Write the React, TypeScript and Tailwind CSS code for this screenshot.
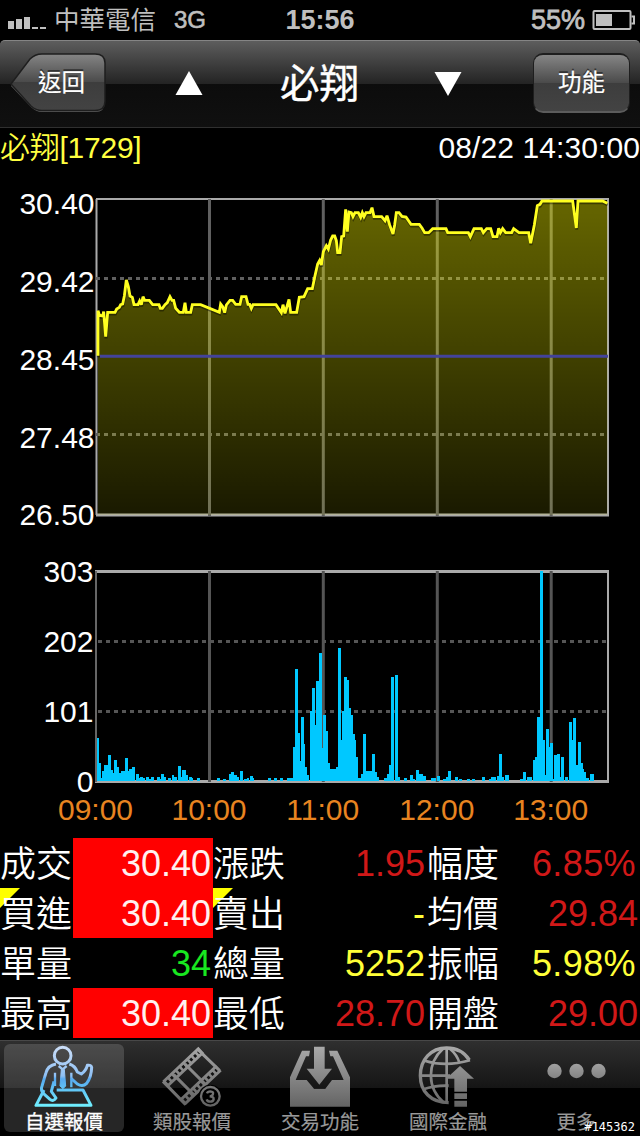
import type { ReactNode } from 'react';
import clsx from 'clsx';

type Tone = 'red' | 'yellow' | 'green' | 'limit';

interface Quote {
  label: string;
  value: string;
  tone: Tone;
  flagged?: boolean;
}

const quotes: Quote[] = [
  { label: '成交', value: '30.40', tone: 'limit' },
  { label: '漲跌', value: '1.95', tone: 'red' },
  { label: '幅度', value: '6.85%', tone: 'red' },
  { label: '買進', value: '30.40', tone: 'limit', flagged: true },
  { label: '賣出', value: '-', tone: 'yellow', flagged: true },
  { label: '均價', value: '29.84', tone: 'red' },
  { label: '單量', value: '34', tone: 'green' },
  { label: '總量', value: '5252', tone: 'yellow' },
  { label: '振幅', value: '5.98%', tone: 'yellow' },
  { label: '最高', value: '30.40', tone: 'limit' },
  { label: '最低', value: '28.70', tone: 'red' },
  { label: '開盤', value: '29.00', tone: 'red' },
];

const toneClass: Record<Tone, string> = {
  red: 'text-[#d01818]',
  yellow: 'text-[#ffff38]',
  green: 'text-[#18e820]',
  limit: 'bg-[#ff0000] text-[#fff0f0]',
};

const hours = [
  { x: 96, label: '09:00' },
  { x: 209.5, label: '10:00' },
  { x: 323.3, label: '11:00' },
  { x: 437.3, label: '12:00' },
  { x: 551.2, label: '13:00' },
];

// Both series are in thirds of a pixel
const priceLine =
  '24,497 24,362 28,375 38,378 41,365 47,440 53,367 75,367 80,357 88,352 92,344 98,342 103,318 109,270 115,290 120,318 127,322 132,344 144,344 149,333 154,344 159,320 164,331 178,331 188,344 207,344 211,355 217,355 225,344 232,338 240,320 246,331 251,331 257,355 268,367 280,367 285,338 289,367 302,367 307,344 332,344 388,367 392,342 398,350 404,368 409,345 420,331 428,331 437,343 450,343 455,320 468,320 474,343 479,343 484,355 489,344 558,344 574,368 579,344 585,370 597,328 602,367 620,367 628,322 642,320 653,296 667,296 674,262 683,222 689,211 694,225 700,185 709,167 715,177 722,150 728,138 734,138 739,152 743,188 750,188 755,140 761,138 767,58 772,125 777,66 784,68 789,80 795,68 805,68 812,82 817,68 822,80 828,68 840,68 846,53 852,80 875,80 885,92 891,77 899,105 909,132 914,105 919,68 927,68 936,79 948,81 963,103 988,103 996,114 1004,128 1016,128 1028,116 1068,116 1073,128 1135,128 1141,140 1152,116 1174,116 1180,128 1190,116 1202,116 1209,140 1221,140 1226,115 1231,128 1238,116 1247,128 1265,128 1271,116 1287,128 1316,128 1322,160 1333,105 1342,47 1350,43 1356,33 1448,33 1459,114 1464,33 1538,33 1552,40';

// [left, right, top]
const volumeBars = [
  [200, 207, 535], [207, 212, 610], [212, 216, 655], [216, 222, 632], [222, 234, 614], [234, 243, 586],
  [243, 248, 630], [248, 252, 640], [252, 260, 600], [260, 268, 622], [268, 273, 638], [273, 285, 633],
  [285, 293, 595], [293, 298, 632], [298, 306, 627], [306, 314, 622], [318, 327, 643], [327, 330, 655],
  [330, 338, 650], [338, 345, 655], [347, 356, 652], [356, 362, 657], [362, 371, 652], [381, 390, 652],
  [390, 393, 657], [393, 402, 643], [402, 407, 650], [414, 422, 655], [426, 432, 646], [432, 440, 650],
  [443, 452, 619], [452, 457, 650], [457, 468, 631], [468, 473, 646], [477, 486, 650], [486, 490, 655],
  [501, 510, 655], [561, 570, 655], [578, 587, 658], [597, 603, 643], [603, 612, 637], [612, 621, 646],
  [621, 627, 652], [629, 638, 633], [641, 650, 658], [650, 656, 655], [660, 668, 649], [668, 672, 655],
  [714, 723, 655], [732, 741, 655], [750, 759, 655], [771, 789, 655], [789, 795, 562], [795, 804, 328],
  [804, 809, 520], [809, 813, 603], [813, 822, 472], [822, 825, 553], [825, 831, 622], [831, 837, 646],
  [840, 846, 454], [846, 855, 385], [855, 858, 496], [858, 867, 364], [867, 876, 280], [876, 879, 565],
  [879, 887, 466], [887, 894, 514], [894, 900, 610], [900, 918, 628], [918, 924, 620], [924, 933, 265],
  [933, 937, 540], [937, 942, 454], [942, 951, 352], [951, 957, 361], [957, 962, 445], [962, 969, 466],
  [969, 974, 523], [974, 978, 541], [978, 984, 592], [984, 993, 655], [993, 999, 643], [999, 1008, 523],
  [1008, 1026, 634], [1026, 1035, 583], [1035, 1040, 637], [1040, 1046, 650], [1062, 1071, 655],
  [1071, 1077, 643], [1077, 1083, 616], [1083, 1092, 352], [1095, 1104, 346], [1104, 1109, 652],
  [1122, 1131, 655], [1140, 1149, 646], [1150, 1156, 658], [1158, 1167, 631], [1167, 1180, 643],
  [1180, 1188, 649], [1204, 1218, 655], [1220, 1229, 649], [1240, 1248, 658], [1248, 1254, 652],
  [1254, 1263, 634], [1275, 1284, 652], [1287, 1296, 656], [1312, 1320, 658], [1327, 1334, 658],
  [1356, 1365, 652], [1378, 1384, 656], [1384, 1398, 652], [1401, 1407, 649], [1407, 1416, 583],
  [1416, 1422, 652], [1426, 1436, 646], [1471, 1479, 656], [1479, 1488, 637], [1492, 1506, 650],
  [1509, 1515, 601], [1515, 1521, 592], [1521, 1530, 472], [1530, 1539, 33], [1539, 1545, 541],
  [1545, 1548, 646], [1548, 1557, 508], [1557, 1560, 562], [1560, 1569, 550], [1569, 1572, 658],
  [1572, 1581, 586], [1581, 1590, 583], [1590, 1593, 650], [1593, 1602, 592], [1605, 1614, 650],
  [1617, 1626, 487], [1626, 1629, 541], [1629, 1638, 475], [1638, 1643, 615], [1643, 1653, 547],
  [1653, 1658, 610], [1658, 1663, 628], [1663, 1669, 637], [1669, 1676, 655], [1680, 1692, 643],
];

function StatusBar() {
  return (
    <div className="flex h-10 shrink-0 items-center text-[#bfbfbf]">
      <div className="flex flex-1 items-center">
        <div className="mt-[5px] ml-2 flex h-3 items-end gap-0.5">
          <span className="h-2 w-1.5 bg-[#bfbfbf]" />
          <span className="h-2.5 w-1.5 bg-[#bfbfbf]" />
          <span className="h-3 w-1.5 bg-[#bfbfbf]" />
          <span className="h-0.5 w-1.5 bg-[#bfbfbf]" />
          <span className="h-0.5 w-1.5 bg-[#bfbfbf]" />
        </div>
        <span className="ml-2 text-[25.5px] leading-10">中華電信</span>
        <span className="ml-[18px] text-2xl leading-10 [-webkit-text-stroke:0.6px_#bfbfbf]">3G</span>
      </div>
      <span className="text-[27px] leading-10 font-bold">15:56</span>
      <div className="flex flex-1 items-center justify-end">
        <span className="text-[27px] leading-10 [-webkit-text-stroke:0.8px_#bfbfbf]">55%</span>
        <svg className="mr-[5px] ml-[7px] h-5 w-[43px]" viewBox="0 0 43 20" fill="none">
          <rect x="1.5" y="1" width="37" height="18" rx="1" stroke="#bfbfbf" strokeWidth="2" />
          <path d="M39.5 6.5h2.500v7h-2.500" stroke="#bfbfbf" strokeWidth="2" />
          <path d="M4 4h16v12H4z" fill="#bfbfbf" />
        </svg>
      </div>
    </div>
  );
}

function NavBar() {
  return (
    <div className="h-[88px] shrink-0 overflow-hidden rounded-t-[5px] border-t border-[#858585] border-b border-b-[#303030] bg-[linear-gradient(#5d5d5d_0%,#232323_50%,#0c0c0c_50%,#101010_100%)]">
      <div className="flex h-full items-center pb-0.5">
        <button className="relative ml-2.5 h-[60px] w-24">
          <svg className="absolute inset-0" width="96" height="60" viewBox="0 0 96 60">
            <defs>
              <linearGradient id="back" x1="0" y1="0" x2="0" y2="1">
                <stop offset="0" stopColor="#858585" />
                <stop offset="0.5" stopColor="#4a4a4a" />
                <stop offset="0.5" stopColor="#3d3d3d" />
                <stop offset="1" stopColor="#434343" />
              </linearGradient>
            </defs>
            <path
              d="M1 33 20 7Q25 1.500 32 1.500H85Q95 1.500 95 11V49Q95 59 85 59H32Q26 59 21 54Z"
              fill="#5c5c5c"
            />
            <path
              d="M1 31 20 6Q25 1 32 1H85Q95 1 95 10V48Q95 57.500 85 57.500H32Q26 57.500 21 53Z"
              fill="url(#back)"
              stroke="#1e1e1e"
              strokeWidth="1.5"
            />
          </svg>
          <span className="relative ml-[7px] block text-[23.5px] leading-[58px] text-white [-webkit-text-stroke:0.2px_#fff] [text-shadow:0_-2px_0_#333]">
            返回
          </span>
        </button>
        <svg className="ml-[69px]" width="28" height="26" viewBox="0 0 28 26">
          <path d="M14 1 27.500 25H.500Z" fill="#fff" />
        </svg>
        <h1 className="flex-1 pt-0.5 pl-0.5 text-center text-[39.5px] leading-[60px] text-white [-webkit-text-stroke:0.4px_#fff]">
          必翔
        </h1>
        <svg className="mt-0.5 mr-[71px]" width="28" height="26" viewBox="0 0 28 26">
          <path d="M.500 1H27.500L14 25Z" fill="#fff" />
        </svg>
        <button className="mr-2.5 h-[60px] w-[97px] rounded-[10px] border-2 border-x border-[#1e1e1e] border-b-[#5c5c5c] bg-[linear-gradient(#858585_0%,#4a4a4a_50%,#3d3d3d_50%,#434343_100%)] text-[23.5px] leading-[52px] text-white [-webkit-text-stroke:0.2px_#fff] [text-shadow:0_-2px_0_#333]">
          功能
        </button>
      </div>
    </div>
  );
}

interface AxisProps {
  ticks: { y: number; label: string }[];
  right: number;
}

function AxisLabels({ ticks, right }: AxisProps) {
  return (
    <g fill="#fff" fontSize="30" textAnchor="end">
      {ticks.map((t) => (
        <text key={t.label} x={right} y={t.y}>
          {t.label}
        </text>
      ))}
    </g>
  );
}

function PriceChart() {
  return (
    <svg className="block shrink-0" width="640" height="365" viewBox="0 170 640 365">
      <defs>
        <linearGradient id="area" gradientUnits="userSpaceOnUse" x1="0" y1="30" x2="0" y2="975">
          <stop offset="0" stopColor="#ffff00" stopOpacity="0.4" />
          <stop offset="1" stopColor="#ffff00" stopOpacity="0.1" />
        </linearGradient>
      </defs>
      <AxisLabels
        right={94.5}
        ticks={[
          { y: 214, label: '30.40' },
          { y: 292, label: '29.42' },
          { y: 370, label: '28.45' },
          { y: 448, label: '27.48' },
          { y: 525, label: '26.50' },
        ]}
      />
      <path d="M96.500 199V515M608 199V515" stroke="#aaa" strokeWidth="2" />
      <path d="M96 199H609" stroke="#aaa" strokeWidth="2" />
      <path d="M96 515H609" stroke="#aaa" strokeWidth="3" />
      {hours.slice(1).map((h) => (
        <path key={h.x} d={`M${h.x} 199V516`} stroke="#606060" strokeWidth="3" />
      ))}
      <path d="M96 278.500H608M96 434.500H608" stroke="#606060" strokeWidth="3" strokeDasharray="4 4" />
      <g transform="translate(90 190) scale(0.33333)">
        <polygon points={`24,975 ${priceLine} 1552,975`} fill="url(#area)" />
      </g>
      <path d="M100 356.200H608" stroke="#43439a" strokeWidth="3" />
      <g transform="translate(90 190) scale(0.33333)" fill="none" strokeMiterlimit="3">
        <polyline points={priceLine} stroke="#000" strokeOpacity="0.4" strokeWidth="9" transform="translate(1 5)" />
        <polyline points={priceLine} stroke="#ffff20" strokeWidth="8.5" />
      </g>
    </svg>
  );
}

function VolumeChart() {
  return (
    <svg className="block shrink-0" width="640" height="303" viewBox="0 535 640 303">
      <AxisLabels
        right={93.5}
        ticks={[
          { y: 582, label: '303' },
          { y: 652, label: '202' },
          { y: 722, label: '101' },
          { y: 792, label: '0' },
        ]}
      />
      <path d="M95 571.500H609M95 781.500H609" stroke="#aaa" strokeWidth="3" />
      <path d="M608 570V783" stroke="#aaa" strokeWidth="2" />
      <path d="M96 571V782" stroke="#666" strokeWidth="2" />
      {hours.slice(1).map((h) => (
        <path key={h.x} d={`M${h.x} 571V782`} stroke="#555" strokeWidth="3" />
      ))}
      <path d="M98 641.500H606M98 711.500H606" stroke="#555" strokeWidth="3" strokeDasharray="4 4" />
      <g transform="translate(30 560) scale(0.33333)" fill="#00c8ff" shapeRendering="crispEdges">
        {volumeBars.map(([left, right, top]) => (
          <rect key={left} x={left} y={top} width={right - left} height={663 - top} />
        ))}
      </g>
      <g fill="#e88420" fontSize="30" textAnchor="middle">
        {hours.map((h) => (
          <text key={h.label} x={h.x - 0.5} y="820">
            {h.label}
          </text>
        ))}
      </g>
    </svg>
  );
}

function QuoteGrid() {
  return (
    <div className="grid shrink-0 grid-cols-[213px_214px_213px] text-4xl">
      {quotes.map((q) => (
        <div key={q.label} className="relative flex h-[50px]">
          {q.flagged && (
            <span className="absolute top-0 left-0 size-5 bg-[#ffff00] [clip-path:polygon(0_0,100%_0,0_100%)]" />
          )}
          <span className="relative w-[73px] shrink-0 pt-[1.5px] leading-[50px] font-[350] text-white">{q.label}</span>
          <span
            className={clsx(
              'flex-1 text-right leading-[52px]',
              q.value.endsWith('%') ? 'pr-1 tracking-[0.4px]' : 'pr-0.5',
              toneClass[q.tone]
            )}
          >
            {q.value}
          </span>
        </div>
      ))}
    </div>
  );
}

function TraderIcon() {
  return (
    <svg className="shrink-0" width="60" height="64" viewBox="100 22 180 192" fill="none" stroke="url(#trader)" strokeWidth="9" strokeLinejoin="round">
      <defs>
        <linearGradient id="trader" gradientUnits="userSpaceOnUse" x1="0" y1="25" x2="0" y2="210">
          <stop offset="0" stopColor="#cfe0f8" />
          <stop offset="0.5" stopColor="#8fc0f4" />
          <stop offset="0.55" stopColor="#58aaf0" />
          <stop offset="1" stopColor="#70f0ff" />
        </linearGradient>
      </defs>
      <ellipse cx="186" cy="57" rx="25" ry="25" />
      <path d="M166 82Q142 86 136 108L124 148Q118 162 132 174L148 188Q158 196 166 184L152 164 160 134" />
      <path d="M206 82Q224 88 230 106L242 112Q256 102 260 86Q272 84 273 92Q272 122 258 140Q246 152 230 142L212 126" />
      <path d="M174 88 186 98 198 88M163 108V148M212 108V152" strokeWidth="7" />
      <path d="M182 98H191L195 148 187 156 178 148Z" fill="url(#trader)" strokeWidth="3" />
      <path d="M130 160 106 206H271L247 160H168" />
    </svg>
  );
}

function FilmIcon() {
  return (
    <svg className="shrink-0" width="62" height="64" viewBox="484 22 186 192" fill="none" stroke="url(#film)">
      <defs>
        <linearGradient id="film" gradientUnits="userSpaceOnUse" x1="0" y1="25" x2="0" y2="210">
          <stop offset="0" stopColor="#a8a8a8" />
          <stop offset="1" stopColor="#626262" />
        </linearGradient>
      </defs>
      {/* perforated edges */}
      <path d="M605 40 497 142M657 94 549 196" strokeWidth="26" />
      <path d="M601 44 497 142M653 98 549 196" stroke="#111" strokeWidth="9" strokeDasharray="8 8" />
      <path d="M592 36 660 102M556 82 620 146M522 114 584 176M490 134 558 204" strokeWidth="9" />
      <circle cx="632" cy="179" r="35" fill="#000" stroke="none" />
      <circle cx="632" cy="179" r="28" strokeWidth="7" />
      <path d="M622 170Q624 164 632 164Q642 165 640 172Q638 179 630 179Q643 180 642 188Q640 195 632 195Q623 195 621 188" strokeWidth="7" />
    </svg>
  );
}

function InboxIcon() {
  return (
    <svg className="shrink-0" width="62" height="64" viewBox="117 22 186 192" fill="url(#inbox)">
      <defs>
        <linearGradient id="inbox" gradientUnits="userSpaceOnUse" x1="0" y1="25" x2="0" y2="210">
          <stop offset="0" stopColor="#ababab" />
          <stop offset="1" stopColor="#646464" />
        </linearGradient>
      </defs>
      <path d="M192 30H224V96H246L208 144 170 96H192Z" />
      <path d="M156 42H180L177 59H168L137 130H170L192 156H226L246 130H281L249 59H241L237 42H262L300 122V210H120V122Z" />
    </svg>
  );
}

function GlobeIcon() {
  return (
    <svg className="shrink-0" width="60" height="64" viewBox="508 22 180 192" fill="none" stroke="url(#globe)" strokeWidth="10">
      <defs>
        <linearGradient id="globe" gradientUnits="userSpaceOnUse" x1="0" y1="25" x2="0" y2="210">
          <stop offset="0" stopColor="#ababab" />
          <stop offset="1" stopColor="#646464" />
        </linearGradient>
      </defs>
      <path d="M662 70C644 42 620 34 594 34C546 34 515 70 515 117C515 164 546 198 600 198" />
      <path d="M594 34V200M583 36C534 80 534 155 586 198M604 36Q626 55 632 78M528 72Q590 92 664 71M515 117H604M524 158Q560 145 600 147" strokeWidth="8" />
      <path d="M634 88 676 126H655V165H617V126H592Z" fill="url(#globe)" stroke="none" />
      <path d="M617 170H655V187H617ZM617 192H655V210H617Z" fill="url(#globe)" stroke="none" />
    </svg>
  );
}

function MoreIcon() {
  return (
    <svg className="shrink-0" width="60" height="64" viewBox="0 0 60 64" fill="url(#more)">
      <defs>
        <linearGradient id="more" gradientUnits="userSpaceOnUse" x1="0" y1="20" x2="0" y2="35">
          <stop offset="0" stopColor="#a0a0a0" />
          <stop offset="1" stopColor="#828282" />
        </linearGradient>
      </defs>
      <circle cx="8.500" cy="27" r="7.200" />
      <circle cx="30.500" cy="27" r="7.200" />
      <circle cx="52.500" cy="27" r="7.200" />
    </svg>
  );
}

function Tab({ label, icon, active }: { label: string; icon: ReactNode; active?: boolean }) {
  return (
    <button
      className={clsx(
        'mx-1 mt-[3px] flex h-[88px] flex-col items-center rounded-md',
        active
          ? 'bg-white/15 text-white [-webkit-text-stroke:0.3px_#fff]'
          : 'text-[#999] [-webkit-text-stroke:0.2px_#999]'
      )}
    >
      {icon}
      <span className="pt-0.5 text-[19.5px] leading-6">{label}</span>
    </button>
  );
}

export default function App() {
  return (
    <div className="relative flex h-[1136px] w-[640px] flex-col overflow-hidden bg-black font-['Liberation_Sans','Noto_Sans_CJK_TC',sans-serif]">
      <StatusBar />
      <NavBar />
      <div className="flex h-[42px] shrink-0 justify-between text-3xl leading-[40px]">
        <span className="font-[350] tracking-[-0.25px] text-[#ffff40]">必翔[1729]</span>
        <span className="tracking-[0.1px] text-white">08/22 14:30:00</span>
      </div>
      <PriceChart />
      <VolumeChart />
      <QuoteGrid />
      <div className="mt-0.5 grid h-24 shrink-0 grid-cols-5 border-t border-[#484848] bg-[linear-gradient(#2f2f2f_0px,#151515_47px,#000_47px)]">
        <Tab label="自選報價" icon={<TraderIcon />} active />
        <Tab label="類股報價" icon={<FilmIcon />} />
        <Tab label="交易功能" icon={<InboxIcon />} />
        <Tab label="國際金融" icon={<GlobeIcon />} />
        <Tab label="更多" icon={<MoreIcon />} />
      </div>
      <span className="absolute right-[5px] bottom-0 font-['DejaVu_Sans_Mono',monospace] text-xs leading-[18px] text-white">
        #145362
      </span>
    </div>
  );
}
